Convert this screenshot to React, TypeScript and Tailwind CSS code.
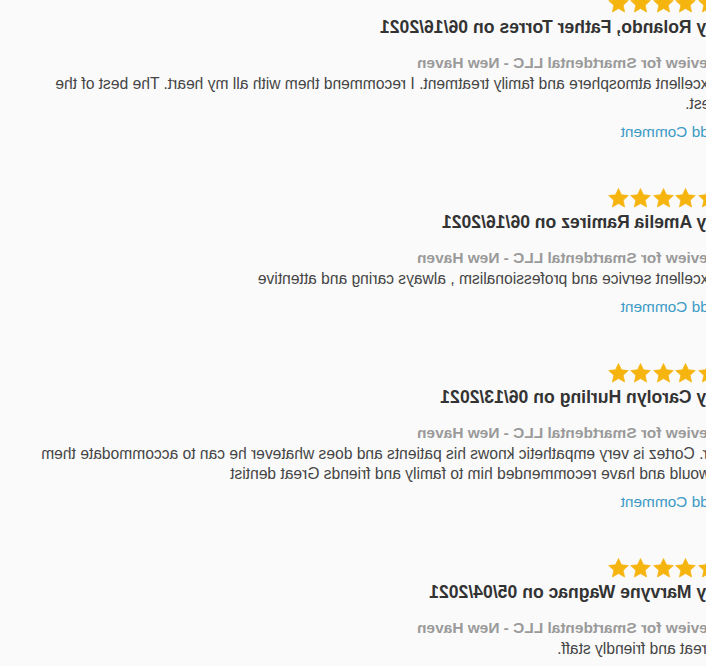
import React from "react";

const Star = () => (
  <svg width="21" height="20" viewBox="0 0 24 23" className="shrink-0">
    <path
      d="M12 0.6l3.4 7.2 7.9 0.9-5.9 5.4 1.6 7.8L12 17.9l-7 4 1.6-7.8L0.7 8.7l7.9-0.9z"
      fill="#f6b40e"
      stroke="#f6b40e"
      strokeWidth="0.8"
      strokeLinejoin="round"
    />
  </svg>
);

type Review = { by: string; date: string; body: string };

const reviews: Review[] = [
  {
    by: "Rolando, Father Torres",
    date: "06/16/2021",
    body: "Excellent atmosphere and family treatment. I recommend them with all my heart. The best of the best.",
  },
  {
    by: "Amelia Ramirez",
    date: "06/16/2021",
    body: "Excellent service and professionalism , always caring and attentive",
  },
  {
    by: "Carolyn Hurling",
    date: "06/13/2021",
    body: "Dr. Cortez is very empathetic knows his patients and does whatever he can to accommodate them I would and have recommended him to family and friends Great dentist",
  },
  {
    by: "Marvyne Wagnac",
    date: "05/04/2021",
    body: "Great and friendly staff.",
  },
];

export default function App() {
  return (
    <div className="w-[706px] h-[666px] overflow-hidden bg-[#fafafa]">
      <div
        className="w-[706px] h-[666px] -scale-x-100 bg-[#fafafa]"
        style={{ fontFamily: '"Liberation Sans", Arial, sans-serif' }}
      >
        <div className="ml-[-13px] mt-[-7px] w-[684px] flex flex-col gap-[46px]">
          {reviews.map((r, i) => (
            <div key={i} className="flex flex-col">
              <div className="flex gap-[1.5px] h-[20px]">
                <Star />
                <Star />
                <Star />
                <Star />
                <Star />
              </div>
              <div className="mt-[4px] text-[17.6px] leading-[20px] font-bold text-[#333333]">
                By {r.by} on {r.date}
              </div>
              <div className="mt-[16px] text-[15.45px] leading-[20px] font-bold text-[#9a9a9a]">
                Review for Smartdental LLC - New Haven
              </div>
              <div className="mt-[1px] text-[15.6px] leading-[20px] text-[#454545]">
                {r.body}
              </div>
              <div className="mt-[8px] text-[15.4px] leading-[20px] text-[#3d9ac6]">
                Add Comment
              </div>
            </div>
          ))}
        </div>
      </div>
    </div>
  );
}
